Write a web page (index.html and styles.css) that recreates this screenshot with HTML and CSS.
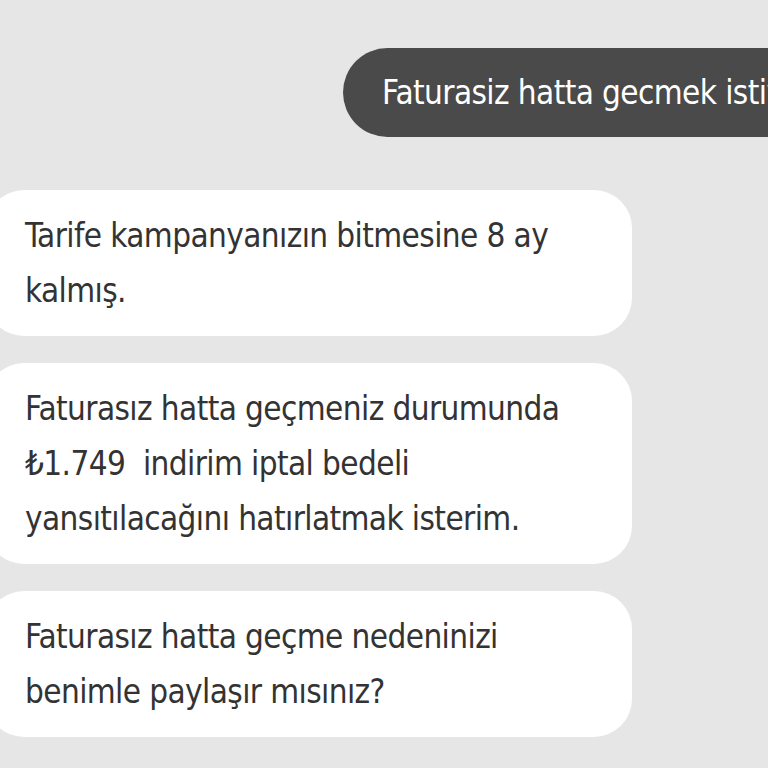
FILE: index.html
```html
<!DOCTYPE html>
<html lang="tr">
<head>
    <meta charset="UTF-8">
    <meta name="viewport" content="width=device-width, initial-scale=1.0">
    <title>Sohbet</title>
    <link rel="stylesheet" href="styles.css">
</head>
<body>

<div class="chat">
    <div class="row row-user">
        <div class="bubble bubble-user">Faturasiz hatta gecmek istiyorum</div>
    </div>

    <div class="row row-bot">
        <div class="bubble bubble-bot">Tarife kampanyanızın bitmesine 8 ay kalmış.</div>
    </div>

    <div class="row row-bot">
        <div class="bubble bubble-bot">Faturasız hatta geçmeniz durumunda ₺1.749&nbsp; indirim iptal bedeli yansıtılacağını hatırlatmak isterim.</div>
    </div>

    <div class="row row-bot">
        <div class="bubble bubble-bot">Faturasız hatta geçme nedeninizi benimle paylaşır mısınız?</div>
    </div>
</div>

</body>
</html>
```

FILE: styles.css
```css
html, body {
    margin: 0;
    padding: 0;
}
body {
    background-color: #e6e6e6;
    font-family: "DejaVu Sans Condensed", "Open Sans", sans-serif;
    color: #333;
    width: 768px;
    height: 768px;
    overflow: hidden;
}
.chat {
    display: flex;
    flex-direction: column;
    padding-top: 48px;
}
.row {
    display: flex;
}
.row-user {
    margin-bottom: 53px;
}
.row-bot {
    margin-bottom: 27px;
}
.bubble {
    font-size: 33px;
    line-height: 55px;
    letter-spacing: -0.6px;
    box-sizing: border-box;
}
.bubble-user {
    margin-left: 343px;
    background-color: #4a4a4a;
    color: #fff;
    white-space: nowrap;
    padding: 17px 60px 17px 39px;
    border-radius: 45px 0 0 45px;
}
.bubble-bot {
    margin-left: -14px;
    width: 646px;
    background-color: #fff;
    padding: 18px 40px 18px 39px;
    border-radius: 38px;
}
```
